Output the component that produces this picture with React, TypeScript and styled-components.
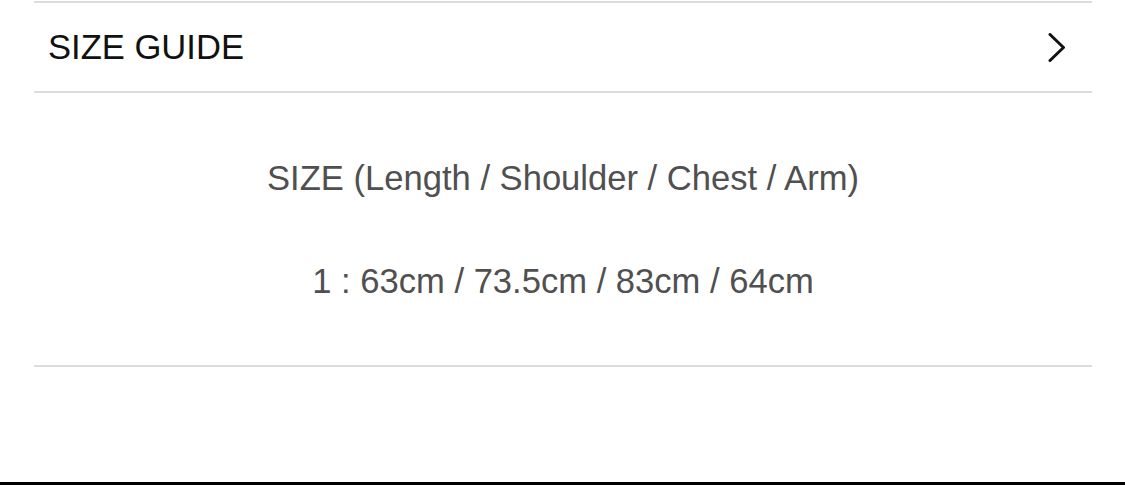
import React from "react";
import styled, { createGlobalStyle } from "styled-components";

const Global = createGlobalStyle`
  html, body { margin: 0; padding: 0; background: #fff; }
  body { font-family: "Liberation Sans", Arial, Helvetica, sans-serif; }
`;

const Page = styled.div`
  width: 1125px;
  height: 485px;
  box-sizing: border-box;
  display: flex;
  flex-direction: column;
  border-bottom: 3px solid #000;
  padding-top: 1px;
`;

const Section = styled.section`
  margin: 0 33px 0 34px;
`;

const Header = styled.div`
  height: 88px;
  border-top: 2px solid #dcdcdc;
  border-bottom: 2px solid #dcdcdc;
  display: flex;
  align-items: center;
  justify-content: space-between;
  padding: 0 26px 0 14px;
`;

const Title = styled.span`
  font-size: 34.6px;
  line-height: 40px;
  color: #111;
`;

const Body = styled.div`
  padding: 65px 0 64px;
  border-bottom: 2px solid #dcdcdc;
  display: flex;
  flex-direction: column;
  align-items: center;
  gap: 63px;
`;

const Line = styled.p`
  margin: 0;
  font-size: 34.6px;
  line-height: 40px;
  color: #505050;
  text-align: center;
`;

const Chevron = () => (
  <svg width="18" height="29" viewBox="0 0 18 29" fill="none">
    <polyline
      points="2,1.5 15.5,14.5 2,27.5"
      stroke="#111"
      strokeWidth="3"
      strokeLinecap="round"
      strokeLinejoin="round"
    />
  </svg>
);

export default function App() {
  return (
    <>
      <Global />
      <Page>
        <Section>
          <Header>
            <Title>SIZE GUIDE</Title>
            <Chevron />
          </Header>
          <Body>
            <Line>SIZE (Length / Shoulder / Chest / Arm)</Line>
            <Line>1 : 63cm / 73.5cm / 83cm / 64cm</Line>
          </Body>
        </Section>
      </Page>
    </>
  );
}
